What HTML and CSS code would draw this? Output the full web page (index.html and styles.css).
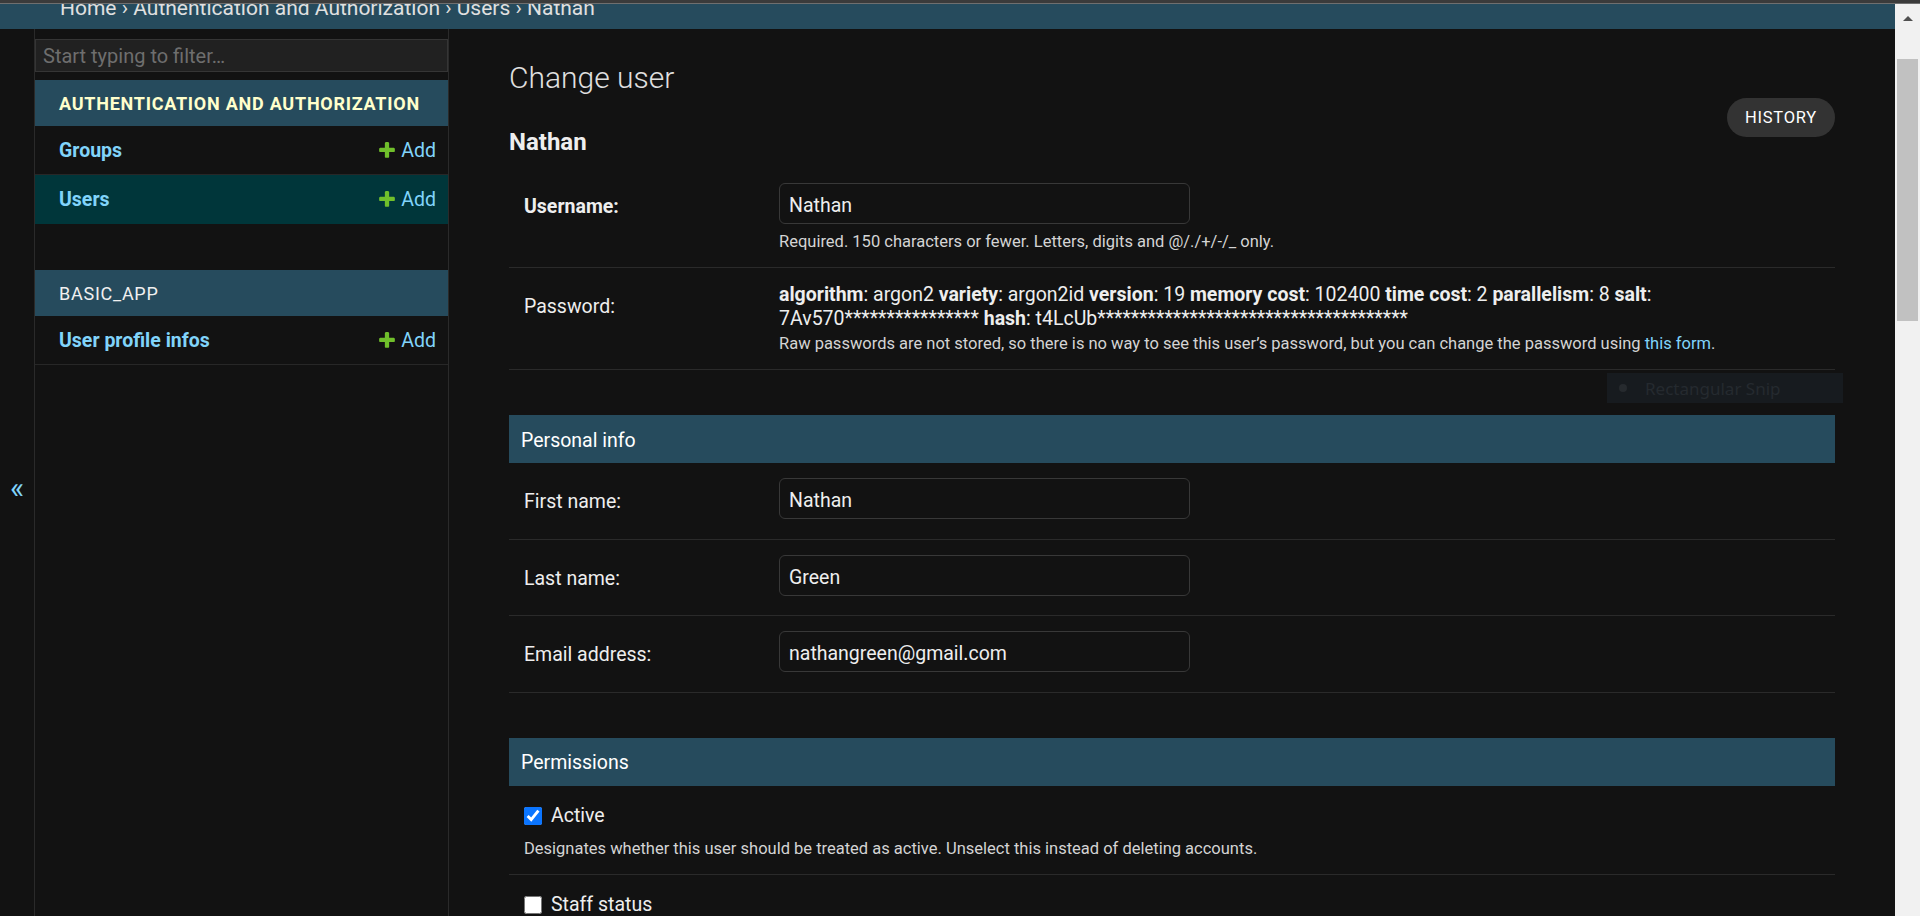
FILE: index.html
```html
<!DOCTYPE html>
<html lang="en">
<head>
<meta charset="utf-8">
<title>Nathan | Change user | Django site admin</title>
<link rel="stylesheet" href="styles.css">
</head>
<body>
<div class="chrome-edge"></div>
<div class="viewport">
  <div class="page">
    <nav class="breadcrumbs"><div class="crumbs">Home › Authentication and Authorization › Users › Nathan</div></nav>
    <div class="main">
      <div class="toggle-nav" role="button" aria-label="Toggle navigation">«</div>
      <nav class="sidebar">
        <input class="nav-filter" type="text" placeholder="Start typing to filter…">
        <div class="app current-app">
          <div class="caption">Authentication and Authorization</div>
          <div class="model-row">
            <a class="model" href="#">Groups</a>
            <a class="addlink" href="#"><svg class="plus" viewBox="0 0 1792 1792" aria-hidden="true"><path fill="#70bf2b" d="M1600 796v192q0 40-28 68t-68 28h-416v416q0 40-28 68t-68 28h-192q-40 0-68-28t-28-68v-416h-416q-40 0-68-28t-28-68v-192q0-40 28-68t68-28h416v-416q0-40 28-68t68-28h192q40 0 68 28t28 68v416h416q40 0 68 28t28 68z"/></svg>Add</a>
          </div>
          <div class="model-row selected">
            <a class="model" href="#">Users</a>
            <a class="addlink" href="#"><svg class="plus" viewBox="0 0 1792 1792" aria-hidden="true"><path fill="#70bf2b" d="M1600 796v192q0 40-28 68t-68 28h-416v416q0 40-28 68t-68 28h-192q-40 0-68-28t-28-68v-416h-416q-40 0-68-28t-28-68v-192q0-40 28-68t68-28h416v-416q0-40 28-68t68-28h192q40 0 68 28t28 68v416h416q40 0 68 28t28 68z"/></svg>Add</a>
          </div>
        </div>
        <div class="app">
          <div class="caption">BASIC_APP</div>
          <div class="model-row">
            <a class="model" href="#">User profile infos</a>
            <a class="addlink" href="#"><svg class="plus" viewBox="0 0 1792 1792" aria-hidden="true"><path fill="#70bf2b" d="M1600 796v192q0 40-28 68t-68 28h-416v416q0 40-28 68t-68 28h-192q-40 0-68-28t-28-68v-416h-416q-40 0-68-28t-28-68v-192q0-40 28-68t68-28h416v-416q0-40 28-68t68-28h192q40 0 68 28t28 68v416h416q40 0 68 28t28 68z"/></svg>Add</a>
          </div>
        </div>
      </nav>
      <div class="content">
        <div class="content-head">
          <div class="titles">
            <h1>Change user</h1>
            <h2 class="subtitle">Nathan</h2>
          </div>
          <a class="history" href="#">History</a>
        </div>

        <fieldset class="module">
          <div class="form-row has-help">
            <div class="field">
              <label class="required" for="id_username">Username:</label>
              <div class="field-body">
                <input class="vTextField" id="id_username" type="text" value="Nathan">
                <div class="help">Required. 150 characters or fewer. Letters, digits and @/./+/-/_ only.</div>
              </div>
            </div>
          </div>
          <div class="form-row has-help">
            <div class="field">
              <label>Password:</label>
              <div class="field-body readonly">
                <div class="pw-line"><b>algorithm</b>: argon2 <b>variety</b>: argon2id <b>version</b>: 19 <b>memory cost</b>: 102400 <b>time cost</b>: 2 <b>parallelism</b>: 8 <b>salt</b>:</div>
                <div class="pw-line">7Av570**************** <b>hash</b>: t4LcUb*************************************</div>
                <div class="help pw-help">Raw passwords are not stored, so there is no way to see this user’s password, but you can change the password using <a href="#">this form</a>.</div>
              </div>
            </div>
          </div>
        </fieldset>

        <fieldset class="module">
          <h2 class="module-title">Personal info</h2>
          <div class="form-row">
            <div class="field">
              <label for="id_first_name">First name:</label>
              <div class="field-body"><input class="vTextField" id="id_first_name" type="text" value="Nathan"></div>
            </div>
          </div>
          <div class="form-row">
            <div class="field">
              <label for="id_last_name">Last name:</label>
              <div class="field-body"><input class="vTextField" id="id_last_name" type="text" value="Green"></div>
            </div>
          </div>
          <div class="form-row">
            <div class="field">
              <label for="id_email">Email address:</label>
              <div class="field-body"><input class="vTextField" id="id_email" type="text" value="nathangreen@gmail.com"></div>
            </div>
          </div>
        </fieldset>

        <fieldset class="module">
          <h2 class="module-title">Permissions</h2>
          <div class="form-row has-help">
            <div class="checkbox-row">
              <input type="checkbox" id="id_is_active" checked>
              <label for="id_is_active">Active</label>
            </div>
            <div class="help check-help">Designates whether this user should be treated as active. Unselect this instead of deleting accounts.</div>
          </div>
          <div class="form-row has-help">
            <div class="checkbox-row">
              <input type="checkbox" id="id_is_staff">
              <label for="id_is_staff">Staff status</label>
            </div>
            <div class="help check-help">Designates whether the user can log into this admin site.</div>
          </div>
        </fieldset>
      </div>
    </div>
  </div>
  <div class="scrollbar">
    <div class="sb-arrow"></div>
    <div class="sb-thumb"></div>
  </div>
</div>
<div class="snip"><span class="snip-dot"></span><span class="snip-text">Rectangular Snip</span></div>
</body>
</html>
```

FILE: styles.css
```css
* { box-sizing: border-box; }

html, body {
  margin: 0;
  padding: 0;
}

body {
  width: 1920px;
  height: 916px;
  overflow: hidden;
  position: relative;
  display: flex;
  flex-direction: column;
  background: #121212;
  color: #eeeeee;
  font-family: Roboto, "Liberation Sans", Arial, sans-serif;
  font-size: 19.5px;
}

a { text-decoration: none; }

.chrome-edge {
  flex: 0 0 4px;
  background: #3b3b3b;
  border-bottom: 1px solid #6f6f6f;
}

.viewport {
  flex: 1;
  display: flex;
  min-height: 0;
}

.page {
  flex: 1;
  min-width: 0;
  display: flex;
  flex-direction: column;
}

/* Breadcrumbs (scrolled mostly out of view) */
.breadcrumbs {
  flex: 0 0 25px;
  height: 25px;
  overflow: hidden;
  background: #264b5d;
  color: #e0e0e0;
  padding: 0 60px;
  font-size: 21px;
  line-height: 21px;
}
.crumbs {
  margin-top: -6px;
  white-space: nowrap;
}

.main {
  flex: 1;
  min-height: 0;
  display: flex;
}

/* Sidebar toggle */
.toggle-nav {
  flex: 0 0 35px;
  display: flex;
  align-items: center;
  justify-content: center;
  padding-top: 29px;
  border-right: 1px solid #2a2a2a;
  color: #81d4fa;
  font-size: 30px;
}

/* Navigation sidebar */
.sidebar {
  flex: 0 0 414px;
  border-right: 1px solid #2a2a2a;
  padding-top: 10px;
}

.nav-filter {
  display: block;
  width: 100%;
  height: 33px;
  margin: 0 0 8px;
  padding: 0 7px;
  border: 1px solid #353535;
  background: #212121;
  color: #eeeeee;
  font-family: Roboto, "Liberation Sans", Arial, sans-serif;
  font-size: 20px;
  outline: none;
}
.nav-filter::placeholder { color: #6e6e6e; }

.app { margin-bottom: 46px; }

.caption {
  height: 46px;
  display: flex;
  align-items: center;
  padding: 0 24px;
  background: #264b5d;
  color: #f0f0f0;
  font-size: 18px;
  letter-spacing: 0.75px;
  text-transform: uppercase;
  white-space: nowrap;
}
.current-app .caption {
  color: #ffffcc;
  font-weight: 700;
}

.model-row {
  height: 49px;
  display: flex;
  align-items: center;
  justify-content: space-between;
  padding: 0 12px 0 24px;
  border-bottom: 1px solid #272727;
}
.model-row.selected {
  background: #00363a;
  border-bottom-color: #00363a;
}

.model {
  color: #81d4fa;
  font-weight: 700;
}

.addlink {
  display: flex;
  align-items: center;
  gap: 4px;
  color: #81d4fa;
}
.plus {
  width: 20px;
  height: 20px;
  display: block;
}

/* Content */
.content {
  flex: 1;
  min-width: 0;
  padding: 30px 60px 0;
}

.content-head {
  display: flex;
  justify-content: space-between;
  align-items: flex-start;
}

h1 {
  margin: 2px 0 33px;
  font-size: 30px;
  line-height: 34px;
  font-weight: 300;
  color: #e0e0e0;
}

.subtitle {
  margin: 0 0 12px;
  font-size: 24px;
  line-height: 28px;
  font-weight: 700;
  color: #eeeeee;
}

.history {
  margin-top: 39px;
  height: 39px;
  display: flex;
  align-items: center;
  padding: 0 18px;
  border-radius: 20px;
  background: #333333;
  color: #ffffff;
  font-size: 16.5px;
  letter-spacing: 0.75px;
  text-transform: uppercase;
}

.module {
  margin: 0 0 45px;
  padding: 0;
  border: 0;
  min-width: 0;
}

.module-title {
  margin: 0;
  height: 48px;
  display: flex;
  align-items: center;
  padding: 2px 12px 0;
  background: #264b5d;
  color: #ffffff;
  font-size: 19.5px;
  font-weight: 400;
}

.form-row {
  padding: 15px 15px 19.5px;
  border-bottom: 1px solid #2a2a2a;
}
.form-row.has-help { padding-bottom: 15px; }

.field {
  display: flex;
  align-items: flex-start;
}

.field > label {
  flex: 0 0 255px;
  padding-top: 12px;
  line-height: 23px;
  color: #eeeeee;
}
.field > label.required { font-weight: 700; }

.field-body {
  flex: 1;
  min-width: 0;
}

.vTextField {
  display: block;
  width: 411px;
  height: 41px;
  margin: 0;
  padding: 4px 9px 0;
  border: 1px solid #383838;
  border-radius: 6px;
  background: #121212;
  color: #eeeeee;
  font-family: Roboto, "Liberation Sans", Arial, sans-serif;
  font-size: 19.5px;
  outline: none;
}

.help {
  margin-top: 8px;
  font-size: 16.5px;
  line-height: 20px;
  color: #d4d4d4;
}
.help a { color: #81d4fa; }

.readonly { line-height: 24px; }
.pw-line { white-space: nowrap; }
.readonly .pw-help {
  margin-top: 3px;
  line-height: 20px;
}

.checkbox-row {
  height: 30px;
  display: flex;
  align-items: center;
}
.checkbox-row input {
  width: 18px;
  height: 18px;
  margin: 0 9px 0 0;
  accent-color: #0b75ff;
}
.checkbox-row label { color: #eeeeee; }

.check-help { margin-top: 8px; }

/* Fake browser scrollbar */
.scrollbar {
  flex: 0 0 25px;
  display: flex;
  flex-direction: column;
  align-items: center;
  background: #f1f1f1;
}
.sb-arrow {
  width: 100%;
  height: 29px;
  display: flex;
  align-items: center;
  justify-content: center;
}
.sb-arrow::before {
  content: "";
  border-left: 5px solid transparent;
  border-right: 5px solid transparent;
  border-bottom: 5px solid #505050;
}
.sb-thumb {
  width: 21px;
  height: 262px;
  margin-top: 26px;
  background: #c1c1c1;
}

/* Screen-snip tool tooltip captured in the screenshot */
.snip {
  position: absolute;
  left: 1607px;
  top: 373px;
  width: 236px;
  height: 30px;
  display: flex;
  align-items: center;
  gap: 18px;
  padding-left: 12px;
  background: #171b1f;
  color: #252a2f;
  font-family: "Noto Sans", "Open Sans", sans-serif;
  font-size: 17px;
}
.snip-dot {
  width: 8px;
  height: 8px;
  border-radius: 50%;
  background: #262a2e;
}
```
